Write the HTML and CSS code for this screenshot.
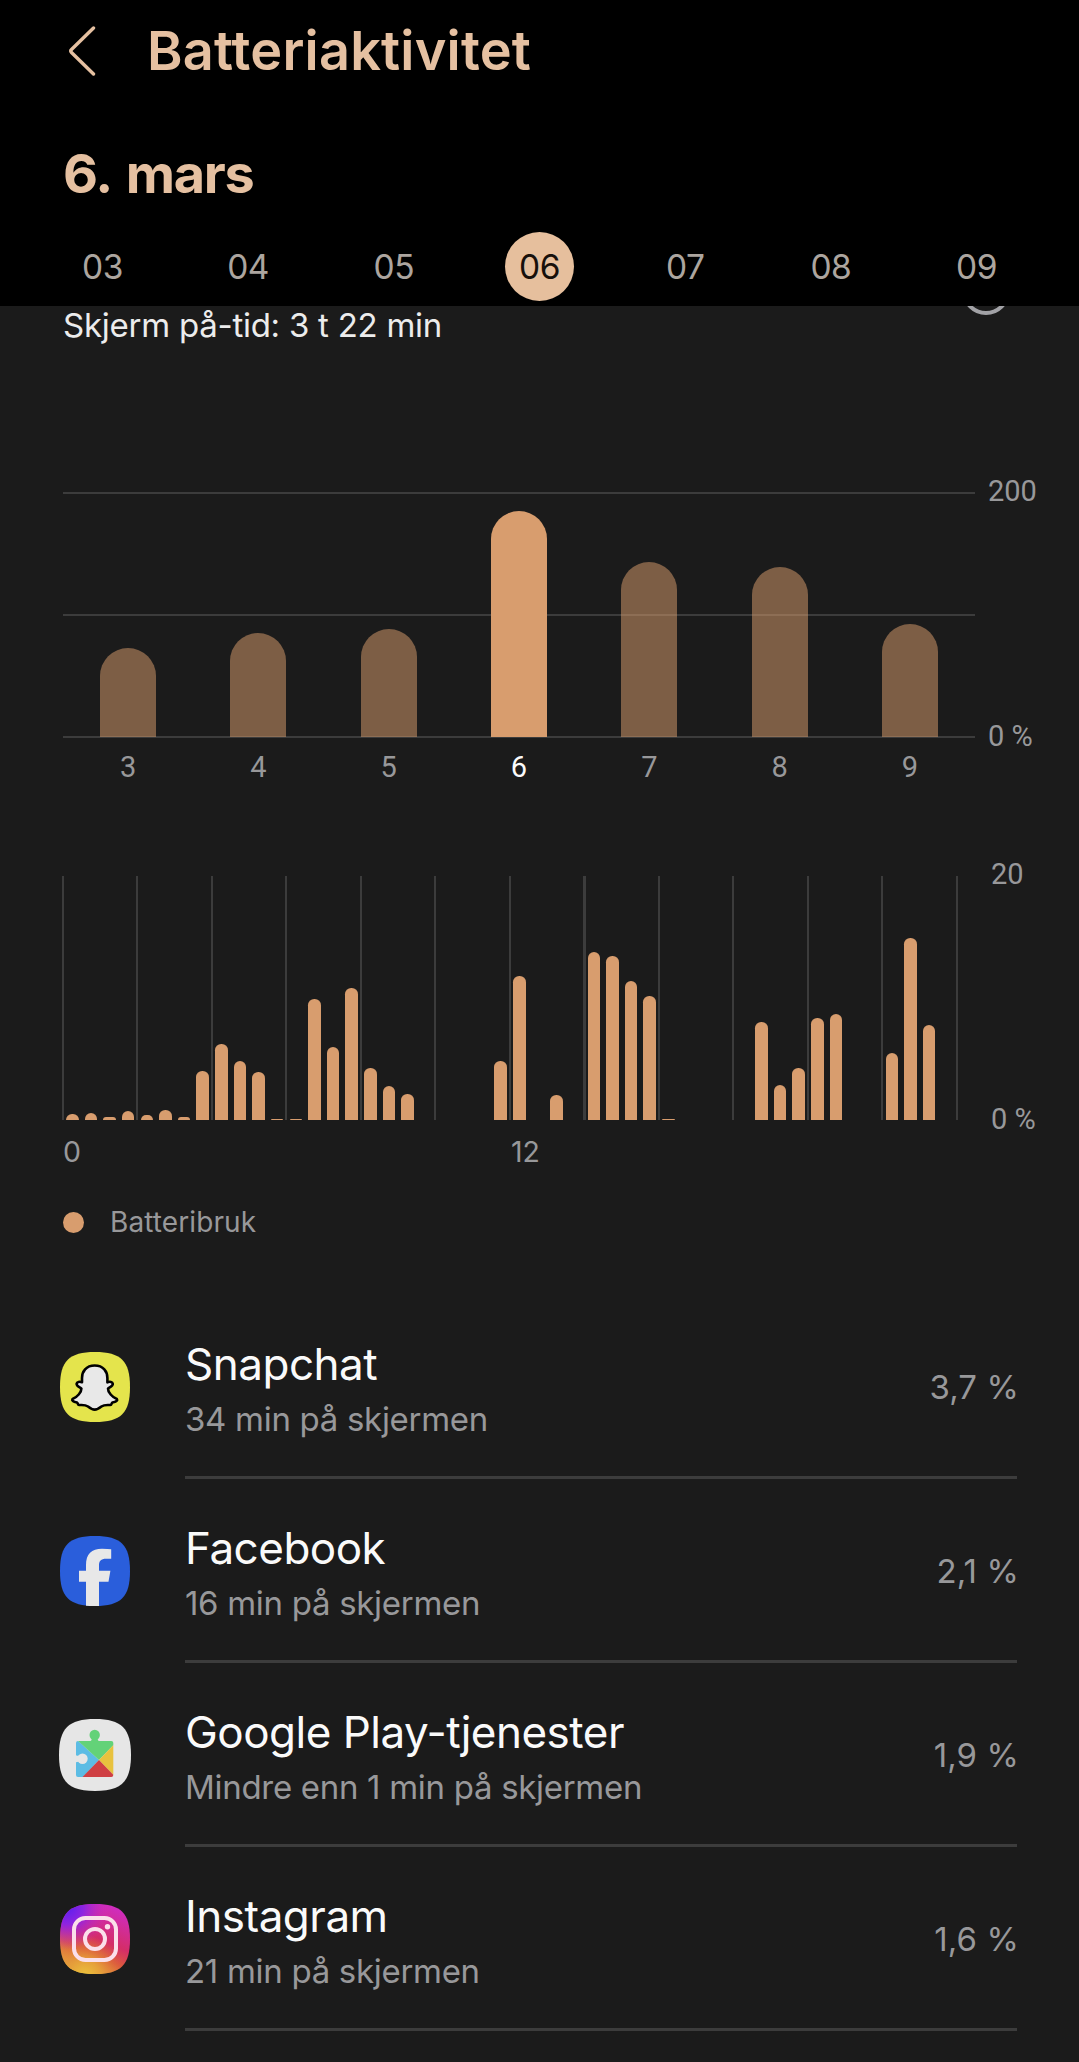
FILE: index.html
```html
<!DOCTYPE html>
<html lang="no">
<head>
  <meta charset="UTF-8" />
  <meta name="viewport" content="width=device-width, initial-scale=1.0"/>
  <title>Batteriaktivitet</title>
  <link rel="stylesheet" href="styles.css">
</head>
<body>
  <header class="header">
    <div class="title-row">
      <svg class="back" viewBox="0 0 28 52"><path d="M25.5 3 L3.5 24.5 Q2 26 3.5 27.5 L25.5 49"/></svg>
      <h1>Batteriaktivitet</h1>
    </div>
    <h2>6. mars</h2>
    <div class="week">
      <span>03</span>
      <span>04</span>
      <span>05</span>
      <span class="selected">06</span>
      <span>07</span>
      <span>08</span>
      <span>09</span>
    </div>
  </header>

  <main>
    <div class="summary">
      <p class="screen-time">Skjerm på-tid: 3 t 22 min</p>
      <span class="info"></span>
    </div>

    <!-- Battery use per day -->
    <section class="daily">
      <div class="daily-plot">
        <div class="day"><div class="bar" style="height: 36.2%"></div></div>
        <div class="day"><div class="bar" style="height: 42.3%"></div></div>
        <div class="day"><div class="bar" style="height: 44.1%"></div></div>
        <div class="day"><div class="bar active" style="height: 92.1%"></div></div>
        <div class="day"><div class="bar" style="height: 71.4%"></div></div>
        <div class="day"><div class="bar" style="height: 69.4%"></div></div>
        <div class="day"><div class="bar" style="height: 46.1%"></div></div>
      </div>
      <div class="scale"><span>200</span><span>0 %</span></div>
      <div class="day-labels">
        <span>3</span><span>4</span><span>5</span><span class="active">6</span><span>7</span><span>8</span><span>9</span>
      </div>
    </section>

    <!-- Battery use per half hour -->
    <section class="hourly">
      <div class="hourly-plot" id="hours"></div>
      <div class="scale"><span>20</span><span>0 %</span></div>
      <div class="hour-labels"><span>0</span><span>12</span></div>
    </section>

    <div class="legend"><span class="dot"></span>Batteribruk</div>

    <ul class="apps">
      <li>
        <svg class="icon" viewBox="0 0 70 70">
          <path fill="#e4e44c" d="M35 0C61 0 70 9 70 35S61 70 35 70 0 61 0 35 9 0 35 0Z"/>
          <path fill="#e8e8e8" stroke="#000" stroke-width="2.6" stroke-linejoin="round" d="M34.7 13.5C26 13.5 22 19.5 22 26V30.3C19.5 29.3 17 29.8 16.6 31.8 16.3 34 19 35 21.4 36.5 21.6 40 17 45.5 12.5 47 11.5 48.3 13 49.8 17 50.6 18 50.9 17.5 53 19 53 22 53 25 52.4 28 54.5 30.5 56.5 32 57.6 34.7 57.6S38.9 56.5 41.4 54.5C44.4 52.4 47.4 53 50.4 53 51.9 53 51.4 50.9 52.4 50.6 56.4 49.8 57.9 48.3 56.9 47 52.4 45.5 47.8 40 48 36.5 50.4 35 53.1 34 52.8 31.8 52.4 29.8 49.9 29.3 47.4 30.3V26C47.4 19.5 43.4 13.5 34.7 13.5Z"/>
        </svg>
        <div class="app">
          <div><h3>Snapchat</h3><p>34 min på skjermen</p></div>
          <span class="percent">3,7 %</span>
        </div>
      </li>
      <li>
        <svg class="icon" viewBox="0 0 70 70">
          <path fill="#2a5edb" d="M35 0C61 0 70 9 70 35S61 70 35 70 0 61 0 35 9 0 35 0Z"/>
          <path fill="#e8e8e8" d="M26 69.7V45.7H19V34.7H26V29C26 18 31.5 12.7 42 12.7Q48 12.7 51.2 13.2V22.7H46C41 22.7 39 25 39 29V34.7H50.4L48.5 45.7H39V69.9Q32 70.2 26 69.7Z"/>
        </svg>
        <div class="app">
          <div><h3>Facebook</h3><p>16 min på skjermen</p></div>
          <span class="percent">2,1 %</span>
        </div>
      </li>
      <li>
        <svg class="icon" viewBox="1 1 70 70">
          <defs>
            <clipPath id="piece"><rect x="17" y="22" width="37.3" height="36" rx="2"/></clipPath>
          </defs>
          <path fill="#e6e6e6" d="M36 0C62.500 0 72 9.500 72 36S62.500 72 36 72 0 62.500 0 36 9.500 0 36 0Z"/>
          <circle cx="35.700" cy="16" r="5.200" fill="#63d278"/>
          <path fill="#63d278" d="M32.700 18h6v2.500q.3 1.500 2 1.700h-10q1.700-.2 2-1.700z"/>
          <g clip-path="url(#piece)">
            <path fill="#5cbce4" d="M17 20L40 41 22 60H17Z"/>
            <path fill="#63d278" d="M18 21H59.500L40 41Z"/>
            <path fill="#e8c23e" d="M56 24.500L40 41 56 57.500Z"/>
            <path fill="#cf3f43" d="M40 41L57 58.500H23Z"/>
            <circle cx="23.500" cy="39.700" r="5.200" fill="#e6e6e6"/>
            <path fill="#e6e6e6" d="M16 35.500q1.500 1.500 4 1.200v6q-2.500-.3-4 1.200z"/>
          </g>
        </svg>
        <div class="app">
          <div><h3>Google Play-tjenester</h3><p>Mindre enn 1 min på skjermen</p></div>
          <span class="percent">1,9 %</span>
        </div>
      </li>
      <li>
        <svg class="icon" viewBox="0 0 70 70">
          <defs>
            <linearGradient id="ig" x1="0.8" y1="0" x2="0.35" y2="1">
              <stop offset="0" stop-color="#cf2cc8"/>
              <stop offset="0.5" stop-color="#d42d68"/>
              <stop offset="0.72" stop-color="#dc5a3c"/>
              <stop offset="1" stop-color="#e8c63e"/>
            </linearGradient>
            <radialGradient id="ig-violet" cx="0.1" cy="0.05" r="0.6">
              <stop offset="0" stop-color="#5a1ff0"/>
              <stop offset="0.4" stop-color="#8f24e0"/>
              <stop offset="1" stop-color="#cf2cc8" stop-opacity="0"/>
            </radialGradient>
            <radialGradient id="ig-yellow" cx="0.35" cy="1.05" r="0.6">
              <stop offset="0" stop-color="#ecc83c"/>
              <stop offset="0.4" stop-color="#e6a03a"/>
              <stop offset="1" stop-color="#dc5a3c" stop-opacity="0"/>
            </radialGradient>
          </defs>
          <path fill="url(#ig)" d="M35 0C61 0 70 9 70 35S61 70 35 70 0 61 0 35 9 0 35 0Z"/>
          <path fill="url(#ig-yellow)" d="M35 0C61 0 70 9 70 35S61 70 35 70 0 61 0 35 9 0 35 0Z"/>
          <path fill="url(#ig-violet)" d="M35 0C61 0 70 9 70 35S61 70 35 70 0 61 0 35 9 0 35 0Z"/>
          <g fill="none" stroke="#fbdfea" stroke-width="4">
            <rect x="14" y="14" width="42" height="42" rx="11.500"/>
            <circle cx="35" cy="35" r="10"/>
          </g>
          <circle cx="47.500" cy="22.700" r="2.700" fill="#fbdfea"/>
        </svg>
        <div class="app">
          <div><h3>Instagram</h3><p>21 min på skjermen</p></div>
          <span class="percent">1,6 %</span>
        </div>
      </li>
    </ul>
  </main>

  <script src="script.js"></script>
</body>
</html>
```
FILE: styles.css
```css
:root {
  --bg: #1b1b1b;
  --header-bg: #000;
  --accent: #e5c0a1;
  --bar: #d89d6e;
  --line: #3c3c3c;
  --muted: #98989a;
  --text: #fafafa;
}

* {
  box-sizing: border-box;
}

body {
  margin: 0;
  height: 2062px;
  overflow: hidden;
  background: var(--bg);
  color: var(--text);
  font-family: Inter, "Open Sans", sans-serif;
}

h1, h2, h3, p, ul {
  margin: 0;
  padding: 0;
}

.header {
  height: 306px;
  padding-top: 20px;
  background: var(--header-bg);
  color: var(--accent);
}

.title-row {
  display: flex;
  align-items: center;
  height: 62px;
  padding-left: 68px;
}

.back {
  width: 28px;
  height: 52px;
  fill: none;
  stroke: var(--accent);
  stroke-width: 3.4;
  stroke-linecap: round;
}

h1 {
  margin-left: 51px;
  font-size: 54px;
  font-weight: 600;
  line-height: 62px;
  letter-spacing: 0.2px;
}

h2 {
  margin: 61px 0 0 63px;
  font-size: 54px;
  font-weight: 700;
  line-height: 62px;
  letter-spacing: -1.3px;
  word-spacing: 4px;
}

.week {
  display: grid;
  grid-template-columns: repeat(7, 145.7px);
  justify-content: center;
  justify-items: center;
  margin-top: 27px;
}

.week span {
  width: 69px;
  height: 69px;
  border-radius: 50%;
  color: #aca59f;
  font-size: 33.5px;
  line-height: 70px;
  text-align: center;
  letter-spacing: -0.5px;
}

.week .selected {
  background: #e6bf9d;
  color: #17100b;
}

.summary {
  display: flex;
  justify-content: space-between;
  height: 186px;
  padding: 0 69px 0 63px;
  overflow: hidden;
}

.screen-time {
  font-size: 33px;
  line-height: 38px;
  letter-spacing: -0.25px;
  color: #ececec;
}

.info {
  width: 48px;
  height: 48px;
  margin-top: -39px;
  border: 4px solid #a2a2a6;
  border-radius: 50%;
}

.daily {
  display: grid;
  grid-template-columns: 912px 1fr;
  column-gap: 13px;
  padding-left: 63px;
  font-family: Roboto, sans-serif;
}

.daily-plot {
  display: grid;
  grid-template-columns: repeat(7, 1fr);
  height: 246px;
  padding-bottom: 1px;
  background:
    linear-gradient(var(--line), var(--line)) 0 0 / 100% 2px no-repeat,
    linear-gradient(var(--line), var(--line)) 0 50% / 100% 2px no-repeat,
    linear-gradient(var(--line), var(--line)) 0 100% / 100% 2px no-repeat;
}

.day {
  display: flex;
  align-items: flex-end;
  justify-content: center;
}

.bar {
  width: 56px;
  border-radius: 28px 28px 0 0;
  background: rgba(216, 157, 110, 0.52);
}

.bar.active {
  background: var(--bar);
}

.scale {
  display: flex;
  flex-direction: column;
  justify-content: space-between;
  margin: -18px 0 -15px;
  color: var(--muted);
  font-family: Roboto, sans-serif;
  font-size: 29px;
  line-height: 34px;
}

.day-labels {
  display: grid;
  grid-template-columns: repeat(7, 1fr);
  margin-top: 12px;
  color: var(--muted);
  font-size: 29px;
  line-height: 34px;
  text-align: center;
}

.day-labels .active {
  color: var(--text);
}

.hourly {
  display: grid;
  grid-template-columns: 896px 1fr;
  column-gap: 33px;
  margin-top: 92px;
  padding-left: 62px;
}

.hourly-plot {
  display: grid;
  grid-template-columns: repeat(48, 1fr);
  align-items: end;
  justify-items: center;
  height: 244px;
  padding: 0 1px;
  background: repeating-linear-gradient(90deg, var(--line) 0 2px, transparent 2px 74.5px);
}

.hourly-plot div {
  width: 12.4px;
  border-radius: 6.2px 6.2px 0 0;
  background: var(--bar);
}

.hourly .scale {
  margin: -19px 0 -16px;
}

.hour-labels {
  display: grid;
  grid-template-columns: 448px 1fr;
  margin-top: 15px;
  padding-left: 1px;
  color: var(--muted);
  font-size: 28.5px;
  line-height: 34px;
}

.legend {
  display: flex;
  align-items: center;
  gap: 26px;
  margin: 36px 0 0 63px;
  height: 34px;
  color: var(--muted);
  font-size: 28px;
  letter-spacing: 0.1px;
}

.dot {
  width: 21px;
  height: 21px;
  border-radius: 50%;
  background: var(--bar);
}

.apps {
  margin-top: 56px;
  padding: 0 62px 0 60px;
  list-style: none;
}

.apps li {
  display: flex;
  height: 184px;
}

.icon {
  width: 70px;
  height: 70px;
  margin-top: 57px;
  overflow: visible;
}

.app {
  display: flex;
  flex: 1;
  justify-content: space-between;
  margin-left: 55px;
  padding-top: 39px;
  border-bottom: 3px solid var(--line);
}

.app h3 {
  font-size: 44px;
  font-weight: 400;
  line-height: 60px;
  letter-spacing: -0.5px;
}

.app p {
  color: var(--muted);
  font-size: 33px;
  line-height: 50px;
  letter-spacing: -0.3px;
}

.percent {
  margin: 29px -2px 0 0;
  color: var(--muted);
  font-size: 33px;
  line-height: 48px;
  letter-spacing: 0.1px;
}
```
FILE: script.js
```js
// battery use per half hour, in percent of the 20 % scale
const usage = [
  2.4, 2.7, 1.1, 3.6, 2.2, 4.1, 1.1, 20.1, 31.1, 24.2, 19.7, 0.6,
  0.6, 49.8, 29.9, 53.9, 21.3, 13.9, 10.7, 0, 0, 0, 0, 24.2,
  59, 0, 10.2, 0, 68.8, 67.2, 57, 50.8, 0.6, 0, 0, 0,
  0, 40.2, 14.3, 21.3, 41.8, 43.4, 0, 0, 27.5, 74.4, 38.9, 0
];

const hours = document.getElementById('hours');
usage.forEach(value => {
  const bar = document.createElement('div');
  bar.style.height = value + '%';
  hours.appendChild(bar);
});
```
